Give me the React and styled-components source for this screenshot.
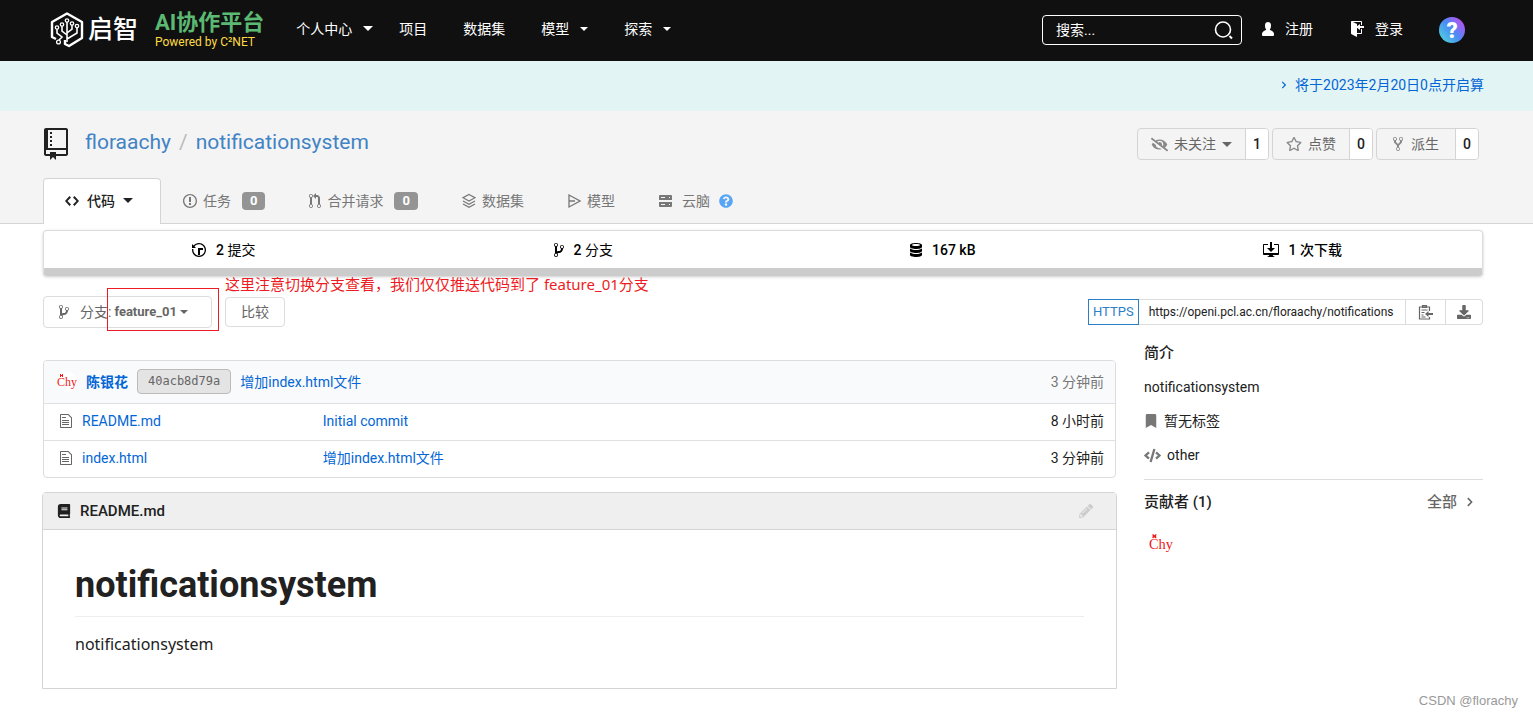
import React, { useState } from 'react';
import styled, { createGlobalStyle } from 'styled-components';
import {
  FaBook,
  FaBookmark,
  FaChevronRight,
  FaCode,
  FaDownload,
  FaEyeSlash,
  FaPencilAlt,
  FaQuestionCircle,
  FaRegStar,
} from 'react-icons/fa';

const GlobalStyle = createGlobalStyle`
  * {
    box-sizing: border-box;
  }
  body {
    margin: 0;
    background: #fff;
    color: #212121;
    font-family: Roboto, 'Noto Sans CJK SC', sans-serif;
    font-size: 14px;
    line-height: 20px;
  }
  a {
    color: #0366d6;
    text-decoration: none;
  }
  h1, h2, h3, p {
    margin: 0;
  }
  button, input {
    font: inherit;
    color: inherit;
  }
  svg {
    display: block;
    flex: none;
  }
`;

/* octicons, [width, path] on a 16 unit high box */
const icons = {
  repo: [12, 'M4 9H3V8h1v1zm0-3H3v1h1V6zm0-2H3v1h1V4zm0-2H3v1h1V2zm8-1v12c0 .55-.45 1-1 1H6v2l-1.5-1.5L3 16v-2H1c-.55 0-1-.45-1-1V1c0-.55.45-1 1-1h10c.55 0 1 .45 1 1zm-1 10H1v2h2v-1h3v1h5v-2zm0-10H2v9h9V1z'],
  code: [14, 'M9.5 3L8 4.5 11.5 8 8 11.5 9.5 13 14 8 9.5 3zm-5 0L0 8l4.5 5L6 11.5 2.5 8 6 4.5 4.5 3z'],
  issue: [14, 'M7 2.3c3.14 0 5.7 2.56 5.7 5.7s-2.56 5.7-5.7 5.7A5.71 5.71 0 0 1 1.3 8c0-3.14 2.56-5.7 5.7-5.7zM7 1C3.14 1 0 4.14 0 8s3.14 7 7 7 7-3.14 7-7-3.14-7-7-7zm1 3H6v5h2V4zm0 6H6v2h2v-2z'],
  pull: [12, 'M11 11.28V5c-.03-.78-.34-1.47-.94-2.06C9.46 2.35 8.78 2.03 8 2H7V0L4 3l3 3V4h1c.27.02.48.11.69.31.21.2.3.42.31.69v6.28A1.993 1.993 0 0 0 10 15a1.993 1.993 0 0 0 1-3.72zm-1 2.92c-.66 0-1.2-.55-1.2-1.2 0-.65.55-1.2 1.2-1.2.65 0 1.2.55 1.2 1.2 0 .65-.55 1.2-1.2 1.2zM4 3c0-1.11-.89-2-2-2a1.993 1.993 0 0 0-1 3.72v6.56A1.993 1.993 0 0 0 2 15a1.993 1.993 0 0 0 1-3.72V4.72c.59-.34 1-.98 1-1.72zm-.8 10c0 .66-.55 1.2-1.2 1.2-.65 0-1.2-.55-1.2-1.2 0-.65.55-1.2 1.2-1.2.65 0 1.2.55 1.2 1.2zM2 4.2C1.34 4.2.8 3.65.8 3c0-.65.55-1.2 1.2-1.2.65 0 1.2.55 1.2 1.2 0 .65-.55 1.2-1.2 1.2z'],
  branch: [10, 'M10 5c0-1.11-.89-2-2-2a1.993 1.993 0 0 0-1 3.72v.3c-.02.52-.23.98-.63 1.38-.4.4-.86.61-1.38.63-.83.02-1.48.16-2 .45V4.72a1.993 1.993 0 0 0-1-3.72C.88 1 0 1.89 0 3a2 2 0 0 0 1 1.72v6.56c-.59.35-1 .99-1 1.72 0 1.11.89 2 2 2 1.11 0 2-.89 2-2 0-.53-.2-1-.53-1.36.09-.06.48-.41.59-.47.25-.11.56-.17.94-.17 1.05-.05 1.95-.45 2.75-1.25S8.95 7.77 9 6.73h-.02C9.59 6.37 10 5.73 10 5zM2 1.8c.66 0 1.2.55 1.2 1.2 0 .65-.55 1.2-1.2 1.2C1.35 4.2.8 3.65.8 3c0-.65.55-1.2 1.2-1.2zm0 12.41c-.66 0-1.2-.55-1.2-1.2 0-.65.55-1.2 1.2-1.2.65 0 1.2.55 1.2 1.2 0 .65-.55 1.2-1.2 1.2zm6-8c-.66 0-1.2-.55-1.2-1.2 0-.65.55-1.2 1.2-1.2.65 0 1.2.55 1.2 1.2 0 .65-.55 1.2-1.2 1.2z'],
  fork: [10, 'M8 1a1.993 1.993 0 0 0-1 3.72V6L5 8 3 6V4.72A1.993 1.993 0 0 0 2 1a1.993 1.993 0 0 0-1 3.72V6.5l3 3v1.78A1.993 1.993 0 0 0 5 15a1.993 1.993 0 0 0 1-3.72V9.5l3-3V4.72A1.993 1.993 0 0 0 8 1zM2 4.2C1.34 4.2.8 3.65.8 3c0-.65.55-1.2 1.2-1.2.65 0 1.2.55 1.2 1.2 0 .65-.55 1.2-1.2 1.2zm3 10c-.66 0-1.2-.55-1.2-1.2 0-.65.55-1.2 1.2-1.2.65 0 1.2.55 1.2 1.2 0 .65-.55 1.2-1.2 1.2zm3-10c-.66 0-1.2-.55-1.2-1.2 0-.65.55-1.2 1.2-1.2.65 0 1.2.55 1.2 1.2 0 .65-.55 1.2-1.2 1.2z'],
  history: [14, 'M8 13H6V6h5v2H8v5zM7 1C4.81 1 2.87 2.02 1.59 3.59L0 2v4h4L2.5 4.5C3.55 3.17 5.17 2.3 7 2.3c3.14 0 5.7 2.56 5.7 5.7s-2.56 5.7-5.7 5.7A5.71 5.71 0 0 1 1.3 8c0-.34.03-.67.09-1H.08C.03 7.33 0 7.66 0 8c0 3.86 3.14 7 7 7s7-3.14 7-7-3.14-7-7-7z'],
  database: [12, 'M6 15c-3.31 0-6-.9-6-2v-2c0-.17.09-.34.21-.5.67.86 3 1.5 5.79 1.5s5.12-.64 5.79-1.5c.13.16.21.33.21.5v2c0 1.1-2.69 2-6 2zm0-4c-3.31 0-6-.9-6-2V7c0-.11.04-.21.09-.31.03-.06.07-.13.12-.19C.88 7.36 3.21 8 6 8s5.12-.64 5.79-1.5c.05.06.09.13.12.19.05.1.09.21.09.31v2c0 1.1-2.69 2-6 2zm0-4c-3.31 0-6-.9-6-2V3c0-1.1 2.69-2 6-2s6 .9 6 2v2c0 1.1-2.69 2-6 2zm0-5c-2.21 0-4 .45-4 1s1.79 1 4 1 4-.45 4-1-1.79-1-4-1z'],
  desktop: [16, 'M4 6h3V0h2v6h3l-4 4-4-4zm11-4h-4v1h4v8H1V3h4V2H1c-.55 0-1 .45-1 1v9c0 .55.45 1 1 1h5.34c-.25.61-.86 1.39-2.34 2h8c-1.48-.61-2.09-1.39-2.34-2H15c.55 0 1-.45 1-1V3c0-.55-.45-1-1-1z'],
  file: [12, 'M6 5H2V4h4v1zM2 8h7V7H2v1zm0 2h7V9H2v1zm0 2h7v-1H2v1zm10-7.5V14c0 .55-.45 1-1 1H1c-.55 0-1-.45-1-1V2c0-.55.45-1 1-1h7.5L12 4.5zM11 5L8 2H1v12h10V5z'],
  person: [12, 'M12 14.002a.998.998 0 0 1-.998.998H1.001A1 1 0 0 1 0 13.999V13c0-2.633 4-4 4-4s.229-.409 0-1c-.841-.62-.944-1.59-1-4 .173-2.413 1.867-3 3-3s2.827.586 3 3c-.056 2.41-.159 3.38-1 4-.229.59 0 1 0 1s4 1.367 4 4v1.002z'],
  signIn: [14, 'M7 6.75V12h4V8h1v4c0 .55-.45 1-1 1H7v3l-5.45-2.72c-.33-.17-.55-.52-.55-.91V1c0-.55.45-1 1-1h9c.55 0 1 .45 1 1v3h-1V1H3l4 2v2.25L10 3v2h4v2h-4v2L7 6.75z'],
  server: [14, 'M1 2h11a1 1 0 0 1 1 1v4H0V3a1 1 0 0 1 1-1zm1 2v1h4V4H2zm8 0v1h1V4h-1zM0 9h13v4a1 1 0 0 1-1 1H1a1 1 0 0 1-1-1V9zm2 2v1h4v-1H2zm8 0v1h1v-1h-1z'],
};

const Octicon = ({ name, size = 16 }) => {
  const [width, path] = icons[name];
  return (
    <svg
      width={(width * size) / 16}
      height={size}
      viewBox={`0 0 ${width} 16`}
      fill='currentColor'
      fillRule='evenodd'
      aria-hidden='true'
    >
      <path d={path} />
    </svg>
  );
};

const Caret = styled.span`
  border: ${({ $size }) => $size || 4}px solid transparent;
  border-top-color: currentColor;
  border-bottom: 0;
`;

const LogoMark = () => (
  <svg width='34' height='36' viewBox='0 0 34 36' fill='none' stroke='#fff' aria-hidden='true'>
    <path d='M6 27L2 25V10L17 1.500L32 10V26L19 34L15 32V28' strokeWidth='2.400' strokeLinejoin='round' />
    <path d='M17 10V30M12 14V19L17 23M22 13V17L17 21M27 16V21L17 27M7 17V21L12 25L9 28' strokeWidth='1.600' />
    <g fill='#101010' strokeWidth='1.300'>
      <circle cx='17' cy='8.500' r='1.700' />
      <circle cx='12' cy='12.500' r='1.700' />
      <circle cx='22' cy='11.500' r='1.700' />
      <circle cx='27' cy='14' r='1.700' />
      <circle cx='7' cy='15.500' r='1.700' />
      <circle cx='8.500' cy='30' r='1.900' />
    </g>
  </svg>
);

const SearchIcon = () => (
  <svg width='20' height='20' viewBox='0 0 20 20' fill='none' stroke='#fff' aria-hidden='true'>
    <circle cx='9' cy='9.500' r='7.500' strokeWidth='1.600' />
    <path d='M15.500 16L18 18.500' strokeWidth='2' />
  </svg>
);

const LayersIcon = () => (
  <svg width='14' height='16' viewBox='0 0 14 16' fill='none' stroke='currentColor' strokeWidth='1.200' aria-hidden='true'>
    <path d='M7 1.500L13 4.700L7 8L1 4.700Z' />
    <path d='M1 8L7 11.200L13 8M1 11L7 14.200L13 11' />
  </svg>
);

const ModelIcon = () => (
  <svg width='13' height='16' viewBox='0 0 13 16' fill='none' stroke='currentColor' strokeWidth='1.300' aria-hidden='true'>
    <path d='M1 2L12 8L1 14ZM1 8H7' />
  </svg>
);

const ClipboardIcon = () => (
  <svg width='16' height='16' viewBox='0 0 16 16' fill='none' stroke='currentColor' strokeWidth='1.200' aria-hidden='true'>
    <path d='M11.500 7V3H1.500V15H11.500V13M4.500 3.500V1.700H8.500V3.500ZM3.500 6H9.500M3.500 8.500H6.500M3.500 11H5.500M3.500 13H7.500' />
    <path d='M15 10H9' strokeWidth='2' />
    <path d='M10.500 7L7 10L10.500 13Z' fill='currentColor' stroke='none' />
  </svg>
);

const Avatar = ({ size = 20 }) => (
  <svg width={size} height={size} viewBox='0 0 20 20' role='img' aria-label='陈银花'>
    <circle cx='10' cy='10' r='10' fill='#fff' />
    <text x='0' y='14' fill='#f01818' fontFamily='Liberation Serif, serif' fontSize='12'>
      Chy
    </text>
    <path d='M3 2L6 5M6 2L3 5M3 3.500H6' stroke='#f01818' />
  </svg>
);

const Header = styled.header`
  display: flex;
  align-items: center;
  height: 61px;
  padding: 0 68px 2px 50px;
  background: #101010;
  color: #fff;
  a {
    color: inherit;
  }
`;

const Brand = styled.a`
  display: flex;
  align-items: center;
  gap: 4px;
  margin-right: 17px;
  font-size: 25px;
  font-weight: 500;
  line-height: 36px;
`;

const Platform = styled.div`
  margin-right: 32px;
  color: #5bb973;
  font-size: 22px;
  font-weight: 700;
  line-height: 24px;
  small {
    display: block;
    color: #ffdc44;
    font-size: 12px;
    font-weight: 400;
    line-height: 14px;
  }
`;

const Nav = styled.nav`
  display: flex;
  gap: ${({ $gap }) => $gap}px;
  margin-right: 26px;
  padding-bottom: 2px;
`;

const NavLink = styled.a`
  display: flex;
  align-items: center;
  gap: 11px;
  white-space: nowrap;
`;

const Search = styled.form`
  display: flex;
  align-items: center;
  width: 200px;
  height: 30px;
  margin-left: auto;
  padding: 0 7px 0 13px;
  border: 1px solid #fff;
  border-radius: 4px;
  input {
    flex: 1;
    min-width: 0;
    padding: 0;
    border: 0;
    outline: 0;
    background: none;
  }
  input::placeholder {
    color: #fff;
    opacity: 1;
  }
  button {
    padding: 0;
    border: 0;
    background: none;
  }
`;

const UserLinks = styled.div`
  display: flex;
  gap: 37px;
  margin: 0 36px 0 20px;
  padding-bottom: 2px;
`;

const Help = styled.a`
  width: 26px;
  height: 26px;
  border-radius: 50%;
  background: linear-gradient(50deg, #4fd0dc 10%, #4a8cf5 50%, #c04cf0 90%);
  font-size: 22px;
  font-weight: 900;
  line-height: 27px;
  text-align: center;
`;

const Notice = styled.div`
  display: flex;
  align-items: center;
  justify-content: flex-end;
  height: 50px;
  padding: 0 49px 2px 43px;
  background: #e3f4f4;
  a {
    display: flex;
    align-items: center;
    gap: 7px;
  }
`;

const RepoHeader = styled.div`
  padding: 17px 50px 0 43px;
  border-bottom: 1px solid #d4d4d5;
  background: #f4f4f4;
`;

const TitleRow = styled.div`
  display: flex;
  justify-content: space-between;
  height: 50px;
`;

const RepoTitle = styled.h2`
  display: flex;
  align-items: flex-start;
  gap: 8px;
  padding-left: 1px;
  font-size: 21px;
  font-weight: 400;
  line-height: 28px;
  svg {
    margin-right: 9px;
  }
  a {
    color: #4183c4;
  }
  span {
    color: #bbb;
  }
`;

const Actions = styled.div`
  display: flex;
  align-items: center;
  align-self: flex-start;
  gap: 3px;
  padding-right: 4px;
`;

const ActionGroup = styled.div`
  display: flex;
  height: 32px;
  border: 1px solid #d4d4d5;
  border-radius: 4px;
  overflow: hidden;
`;

const ActionButton = styled.button`
  display: flex;
  align-items: center;
  gap: ${({ $gap }) => $gap || 6}px;
  padding: 0 ${({ $pad }) => $pad || 13}px;
  border: 0;
  border-right: 1px solid #d4d4d5;
  background: none;
  color: #666;
  svg {
    color: #888;
  }
`;

const Count = styled.a`
  padding: 0 7px;
  background: #fff;
  color: #212121;
  font-weight: 500;
  line-height: 30px;
`;

const Tabs = styled.nav`
  display: flex;
  margin-bottom: -1px;
`;

const Tab = styled.a`
  display: flex;
  align-items: center;
  gap: ${({ $gap }) => $gap || 6}px;
  height: 46px;
  padding: 0 21px 2px;
  border: 1px solid transparent;
  border-bottom: 0;
  border-radius: 4px 4px 0 0;
  color: #777;
  white-space: nowrap;
  ${({ $active }) =>
    $active &&
    `
      width: 118px;
      border-color: #d4d4d5;
      background: #fff;
      color: #212121;
      font-weight: 500;
    `}
`;

const Badge = styled.span`
  margin-left: 5px;
  padding: 0 8px;
  border-radius: 4px;
  background: #949494;
  color: #fff;
  font-size: 13px;
  font-weight: 700;
  line-height: 18px;
`;

const Page = styled.main`
  padding: 6px 50px 0 43px;
`;

const Stats = styled.div`
  display: grid;
  grid-template-columns: repeat(4, 1fr);
  border: 1px solid #dcdcdc;
  border-bottom: 8px solid #ccc;
  border-radius: 4px;
  box-shadow: 0 1px 3px #ccc;
`;

const Stat = styled.a`
  display: flex;
  align-items: center;
  justify-content: center;
  gap: 10px;
  height: 37px;
  color: #000;
  b {
    font-weight: 500;
  }
`;

const Toolbar = styled.div`
  position: relative;
  display: flex;
  align-items: center;
  gap: 13px;
  margin-top: 20px;
`;

const Outlined = styled.button`
  display: flex;
  align-items: center;
  gap: 3px;
  height: ${({ $height }) => $height}px;
  padding: 0 15px;
  border: 1px solid #dcdcdc;
  border-radius: 4px;
  background: #fff;
  color: #666;
  font-size: 14px;
  svg {
    margin-right: 8px;
  }
  b {
    font-size: 13px;
    font-weight: 700;
  }
`;

const BranchButton = styled(Outlined)`
  width: 169px;
`;

/* marker drawn over the branch switcher */
const Marker = styled.div`
  position: absolute;
  top: -8px;
  left: 64px;
  width: 112px;
  height: 43px;
  border: 1px solid #ed1c24;
`;

const MarkerNote = styled.p`
  position: absolute;
  top: -22px;
  left: 182px;
  color: #ed1c24;
  font-family: 'Noto Sans', 'Noto Sans CJK SC', sans-serif;
  font-size: 15px;
  white-space: nowrap;
`;

const Clone = styled.div`
  display: flex;
  width: 395px;
  height: 26px;
  margin-left: auto;
  > * {
    border: 1px solid #dcdcdc;
    border-left: 0;
    background: #fff;
  }
  input {
    flex: 1;
    min-width: 0;
    padding: 0 10px;
    outline: 0;
    font-size: 12px;
  }
`;

const Protocol = styled.button`
  padding: 0 4px;
  border: 1px solid #2b7fc7;
  color: #2b7fc7;
  font-size: 13px;
`;

const IconButton = styled.button`
  display: grid;
  place-items: center;
  width: ${({ $width }) => $width}px;
  padding: 0;
  color: #666;
  &:last-child {
    border-radius: 0 4px 4px 0;
  }
`;

const Columns = styled.div`
  display: grid;
  grid-template-columns: 19fr 6fr;
  gap: 28px;
`;

const FilesBox = styled.div`
  margin-top: 32px;
  border: 1px solid #dcdcdc;
  border-radius: 4px;
  overflow: hidden;
`;

const Files = styled.table`
  width: 100%;
  border-collapse: collapse;
  table-layout: fixed;
  th {
    height: 42px;
    padding: 0 11px 0 13px;
    background: #f9fafb;
    font-weight: 400;
    text-align: left;
  }
  td {
    height: 37px;
    padding: 0 11px 2px;
    border-top: 1px solid #e0e0e0;
  }
  td:first-child {
    padding-left: 16px;
  }
  th:last-child,
  td:last-child {
    text-align: right;
  }
  th:last-child {
    color: #777;
  }
`;

const LastCommit = styled.div`
  display: flex;
  align-items: center;
  gap: 9px;
  b {
    font-weight: 700;
  }
`;

const Hash = styled.a`
  padding: 0 10px;
  border: 1px solid #bbb;
  border-radius: 4px;
  background: #e4e4e4;
  color: #666;
  font-family: 'DejaVu Sans Mono', monospace;
  font-size: 12px;
  line-height: 23px;
`;

const FileName = styled.div`
  display: flex;
  align-items: center;
  gap: 10px;
  color: #666;
`;

const Readme = styled.section`
  margin: 14px -1px 0;
  border: 1px solid #d4d4d5;
  border-radius: 4px 4px 0 0;
`;

const ReadmeHead = styled.div`
  display: flex;
  align-items: center;
  gap: 9px;
  height: 37px;
  padding: 0 23px 0 14px;
  border-bottom: 1px solid #d4d4d5;
  background: #efefef;
  font-size: 15px;
  font-weight: 500;
  a {
    margin-left: auto;
    color: #ccc;
  }
`;

const Markdown = styled.div`
  padding: 33px 32px 32px;
  font-size: 16px;
  line-height: 24px;
  h1 {
    margin-bottom: 15px;
    padding-bottom: 9px;
    border-bottom: 1px solid #eee;
    font-size: 36px;
    line-height: 44px;
  }
  p {
    font-family: 'Noto Sans', sans-serif;
  }
`;

const Side = styled.aside`
  padding-top: 15px;
  h3 {
    font-size: 15px;
    font-weight: 500;
  }
`;

const SideLine = styled.p`
  display: flex;
  align-items: center;
  gap: 6px;
  margin-top: 14px;
  svg {
    color: #777;
  }
`;

const Contributors = styled.div`
  display: flex;
  justify-content: space-between;
  margin: 14px 0 20px;
  padding: 12px 8px 0 0;
  border-top: 1px solid #dcdcdc;
  a {
    display: flex;
    align-items: center;
    gap: 8px;
    color: #666;
    font-size: 15px;
    font-weight: 500;
  }
`;

const AvatarLink = styled.a`
  display: inline-block;
  margin-left: 5px;
`;

const Watermark = styled.footer`
  padding: 2px 15px 0;
  color: #999;
  font-family: 'Liberation Sans', Arial, sans-serif;
  font-size: 13px;
  text-align: right;
`;

const files = [
  { name: 'README.md', message: 'Initial commit', time: '8 小时前' },
  { name: 'index.html', message: '增加index.html文件', time: '3 分钟前' },
];

const App = () => {
  const [query, setQuery] = useState('');

  return (
    <>
      <GlobalStyle />
      <Header>
        <Brand href='#'>
          <LogoMark />
          启智
        </Brand>
        <Platform>
          AI协作平台
          <small>Powered by C²NET</small>
        </Platform>
        <Nav>
          <NavLink href='#'>个人中心 <Caret $size={5} /></NavLink>
        </Nav>
        <Nav $gap={36}>
          <NavLink href='#'>项目</NavLink>
          <NavLink href='#'>数据集</NavLink>
          <NavLink href='#'>模型 <Caret /></NavLink>
          <NavLink href='#'>探索 <Caret /></NavLink>
        </Nav>
        <Search onSubmit={e => e.preventDefault()}>
          <input
            aria-label='搜索'
            placeholder='搜索...'
            value={query}
            onChange={e => setQuery(e.target.value)}
          />
          <button type='submit' aria-label='搜索'><SearchIcon /></button>
        </Search>
        <UserLinks>
          <NavLink href='#'><Octicon name='person' />注册</NavLink>
          <NavLink href='#'><Octicon name='signIn' />登录</NavLink>
        </UserLinks>
        <Help href='#'>?</Help>
      </Header>
      <Notice>
        <a href='#'><FaChevronRight size={8} />将于2023年2月20日0点开启算</a>
      </Notice>

      <RepoHeader>
        <TitleRow>
          <RepoTitle>
            <Octicon name='repo' size={32} />
            <a href='#'>floraachy</a>
            <span>/</span>
            <a href='#'>notificationsystem</a>
          </RepoTitle>
          <Actions>
            <ActionGroup>
              <ActionButton>
                <FaEyeSlash size={17} />未关注 <Caret $size={5} />
              </ActionButton>
              <Count href='#'>1</Count>
            </ActionGroup>
            <ActionGroup>
              <ActionButton><FaRegStar size={16} />点赞</ActionButton>
              <Count href='#'>0</Count>
            </ActionGroup>
            <ActionGroup>
              <ActionButton $pad={16} $gap={8}><Octicon name='fork' />派生</ActionButton>
              <Count href='#'>0</Count>
            </ActionGroup>
          </Actions>
        </TitleRow>
        <Tabs>
          <Tab href='#' $active $gap={8}><Octicon name='code' />代码 <Caret $size={5} /></Tab>
          <Tab href='#'><Octicon name='issue' />任务<Badge>0</Badge></Tab>
          <Tab href='#'><Octicon name='pull' />合并请求<Badge>0</Badge></Tab>
          <Tab href='#'><LayersIcon />数据集</Tab>
          <Tab href='#'><ModelIcon />模型</Tab>
          <Tab href='#' $gap={9}>
            <Octicon name='server' />云脑 <FaQuestionCircle size={14} color='#56a5f7' />
          </Tab>
        </Tabs>
      </RepoHeader>

      <Page>
        <Stats>
          <Stat href='#'><Octicon name='history' /><span><b>2</b> 提交</span></Stat>
          <Stat href='#'><Octicon name='branch' /><span><b>2</b> 分支</span></Stat>
          <Stat href='#'><Octicon name='database' /><b>167 kB</b></Stat>
          <Stat href='#'><Octicon name='desktop' /><b>1 次下载</b></Stat>
        </Stats>
        <Toolbar>
          <BranchButton $height={32}>
            <Octicon name='branch' />分支: <b>feature_01</b><Caret />
          </BranchButton>
          <Outlined $height={30}>比较</Outlined>
          <Marker />
          <MarkerNote>这里注意切换分支查看，我们仅仅推送代码到了 feature_01分支</MarkerNote>
          <Clone>
            <Protocol>HTTPS</Protocol>
            <input
              aria-label='HTTPS'
              readOnly
              value='https://openi.pcl.ac.cn/floraachy/notifications'
            />
            <IconButton $width={40} aria-label='复制'><ClipboardIcon /></IconButton>
            <IconButton $width={37} aria-label='下载'><FaDownload size={14} /></IconButton>
          </Clone>
        </Toolbar>

        <Columns>
          <div>
            <FilesBox>
              <Files>
                <colgroup>
                  <col width='25%' />
                  <col />
                  <col width='12%' />
                </colgroup>
                <thead>
                  <tr>
                    <th colSpan={2}>
                      <LastCommit>
                        <Avatar />
                        <a href='#'><b>陈银花</b></a>
                        <Hash href='#'>40acb8d79a</Hash>
                        <a href='#'>增加index.html文件</a>
                      </LastCommit>
                    </th>
                    <th>3 分钟前</th>
                  </tr>
                </thead>
                <tbody>
                  {files.map(file => (
                    <tr key={file.name}>
                      <td>
                        <FileName>
                          <Octicon name='file' />
                          <a href='#'>{file.name}</a>
                        </FileName>
                      </td>
                      <td><a href='#'>{file.message}</a></td>
                      <td>{file.time}</td>
                    </tr>
                  ))}
                </tbody>
              </Files>
            </FilesBox>
            <Readme>
              <ReadmeHead>
                <FaBook size={14} />
                README.md
                <a href='#' aria-label='编辑'><FaPencilAlt size={14} /></a>
              </ReadmeHead>
              <Markdown>
                <h1>notificationsystem</h1>
                <p>notificationsystem</p>
              </Markdown>
            </Readme>
          </div>
          <Side>
            <h3>简介</h3>
            <SideLine>notificationsystem</SideLine>
            <SideLine><FaBookmark size={14} />暂无标签</SideLine>
            <SideLine><FaCode size={17} />other</SideLine>
            <Contributors>
              <h3>贡献者 (1)</h3>
              <a href='#'>全部 <FaChevronRight size={10} /></a>
            </Contributors>
            <AvatarLink href='#'><Avatar size={24} /></AvatarLink>
          </Side>
        </Columns>
      </Page>
      <Watermark>CSDN @florachy</Watermark>
    </>
  );
};

export default App;
